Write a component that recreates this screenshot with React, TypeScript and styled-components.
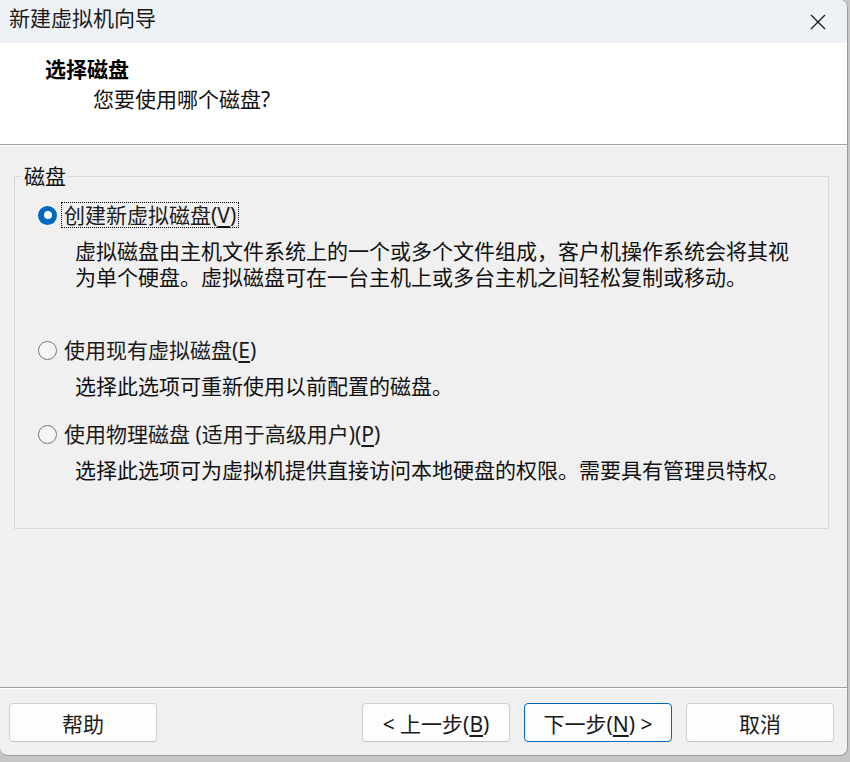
import * as React from 'react';
import styled, { createGlobalStyle, css } from 'styled-components';

const GlobalStyle = createGlobalStyle`
  html, body {
    margin: 0;
    padding: 0;
    background: #c6c6c6;
  }
  body {
    font-family: "Noto Sans", "Noto Sans CJK SC", sans-serif;
    color: #000;
  }
`;

const Window = styled.div`
  width: 847px;
  height: 755px;
  display: flex;
  flex-direction: column;
  background: #f0f0f0;
  border-right: 1px solid #9a9a9a;
  border-bottom: 1px solid #9a9a9a;
  border-radius: 0 8px 8px 8px;
  overflow: hidden;
`;

const TitleBar = styled.div`
  height: 43px;
  flex: none;
  display: flex;
  align-items: center;
  justify-content: space-between;
  padding: 0 21px 9px 9px;
  box-sizing: border-box;
  background: #eef2f7;
  font-size: 21px;
  color: #1a1a1a;
`;

const CloseButton = styled.button`
  border: none;
  background: transparent;
  padding: 0;
  width: 16px;
  height: 16px;
  display: flex;
  margin-top: 9px;

  svg {
    width: 16px;
    height: 16px;
  }
`;

const Header = styled.div`
  height: 101px;
  flex: none;
  background: #fff;
  padding: 11px 0 0 45px;
  box-sizing: border-box;
`;

const HeaderTitle = styled.div`
  font-size: 21px;
  line-height: 30px;
  font-weight: 700;
`;

const HeaderSubtitle = styled.div`
  font-size: 21px;
  line-height: 30px;
  padding-left: 48px;
  color: #111;
`;

const Etched = styled.div`
  flex: none;
  height: 1px;
  background: #a0a0a0;
  border-bottom: 1px solid #fff;
`;

const Content = styled.div`
  flex: 1;
  padding: 18px 0 0 14px;
`;

const GroupBox = styled.fieldset`
  width: 815px;
  height: 365px;
  box-sizing: border-box;
  margin: 0;
  padding: 0 0 0 23px;
  border: 1px solid #d9d9d9;
  border-radius: 0;
`;

const GroupLegend = styled.legend`
  margin-left: -16px;
  padding: 0 2px;
  font-size: 21px;
  line-height: 24px;
  color: #111;
`;

const Option = styled.div<{ gap: number }>`
  margin-top: ${props => props.gap}px;
`;

const OptionRow = styled.label`
  display: flex;
  align-items: center;
  height: 26px;
  gap: 5px;
  font-size: 21px;
  color: #1a1a1a;
`;

const Radio = styled.span<{ checked?: boolean }>`
  width: 19px;
  height: 19px;
  box-sizing: border-box;
  border-radius: 50%;
  flex: none;
  display: flex;
  align-items: center;
  justify-content: center;
  border: 1px solid #7a7a7a;
  background: #f5f5f5;

  ${props =>
    props.checked &&
    css`
      border: none;
      background: #0067c0;

      &::after {
        content: '';
        width: 8px;
        height: 8px;
        border-radius: 50%;
        background: #fff;
      }
    `}
`;

const OptionLabel = styled.span<{ focused?: boolean }>`
  padding: 0 2px;
  line-height: 24px;
  outline: 1px dotted ${props => (props.focused ? '#000' : 'transparent')};
  outline-offset: 0;

  u {
    text-underline-offset: 3px;
  }
`;

const Description = styled.p`
  margin: 10px 0 0 37px;
  font-size: 21px;
  line-height: 26px;
  white-space: nowrap;
  color: #111;
`;

const Footer = styled.div`
  height: 66px;
  flex: none;
  display: flex;
  align-items: flex-start;
  padding: 14px 13px 0 9px;
  box-sizing: border-box;
`;

const NavGroup = styled.div`
  margin-left: auto;
  display: flex;
  gap: 14px;
`;

const Button = styled.button<{ primary?: boolean }>`
  width: 148px;
  height: 39px;
  box-sizing: border-box;
  border: 1px solid ${props => (props.primary ? '#0067c0' : '#d0d0d0')};
  border-bottom-color: ${props => (props.primary ? '#0067c0' : '#c2c2c2')};
  border-radius: 4px;
  background: #fdfdfd;
  font-family: "Noto Sans", "Noto Sans CJK SC", sans-serif;
  font-size: 21px;
  color: #1a1a1a;
  padding: 0;

  u {
    text-underline-offset: 3px;
  }
`;

const CloseIcon = () => (
  <svg viewBox="0 0 16 16" fill="none" stroke="#1a1a1a" strokeWidth="1.3">
    <path d="M1 1 L15 15 M15 1 L1 15" />
  </svg>
);

const App: React.FC = () => {
  return (
    <>
      <GlobalStyle />
      <Window>
        <TitleBar>
          <span>新建虚拟机向导</span>
          <CloseButton aria-label="关闭">
            <CloseIcon />
          </CloseButton>
        </TitleBar>
        <Header>
          <HeaderTitle>选择磁盘</HeaderTitle>
          <HeaderSubtitle>您要使用哪个磁盘?</HeaderSubtitle>
        </Header>
        <Etched />
        <Content>
          <GroupBox>
            <GroupLegend>磁盘</GroupLegend>
            <Option gap={14}>
              <OptionRow>
                <Radio checked />
                <OptionLabel focused>
                  创建新虚拟磁盘(<u>V</u>)
                </OptionLabel>
              </OptionRow>
              <Description>
                虚拟磁盘由主机文件系统上的一个或多个文件组成，客户机操作系统会将其视
                <br />
                为单个硬盘。虚拟磁盘可在一台主机上或多台主机之间轻松复制或移动。
              </Description>
            </Option>
            <Option gap={47}>
              <OptionRow>
                <Radio />
                <OptionLabel>
                  使用现有虚拟磁盘(<u>E</u>)
                </OptionLabel>
              </OptionRow>
              <Description>选择此选项可重新使用以前配置的磁盘。</Description>
            </Option>
            <Option gap={22}>
              <OptionRow>
                <Radio />
                <OptionLabel>
                  使用物理磁盘 (适用于高级用户)(<u>P</u>)
                </OptionLabel>
              </OptionRow>
              <Description>
                选择此选项可为虚拟机提供直接访问本地硬盘的权限。需要具有管理员特权。
              </Description>
            </Option>
          </GroupBox>
        </Content>
        <Etched />
        <Footer>
          <Button>帮助</Button>
          <NavGroup>
            <Button>
              &lt; 上一步(<u>B</u>)
            </Button>
            <Button primary>
              下一步(<u>N</u>) &gt;
            </Button>
            <Button>取消</Button>
          </NavGroup>
        </Footer>
      </Window>
    </>
  );
};

export default App;
